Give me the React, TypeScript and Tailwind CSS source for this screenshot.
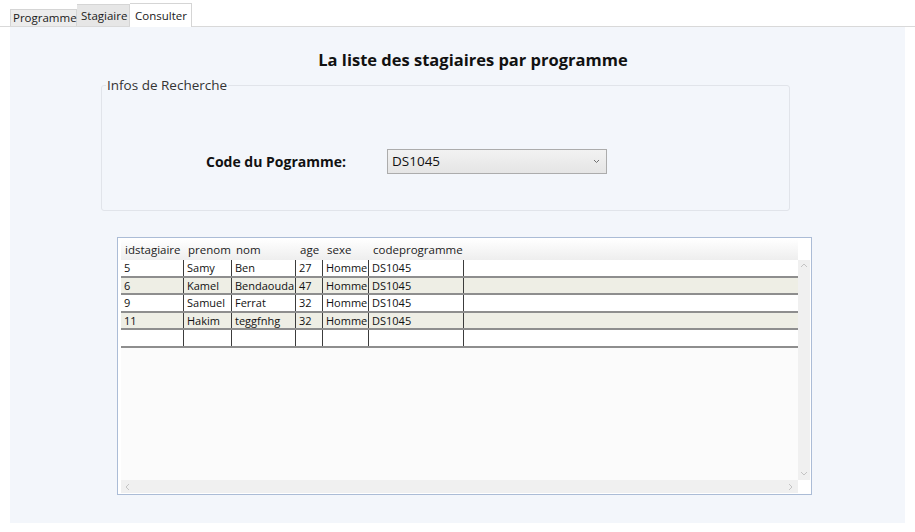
import React from "react";

type Row = {
  id: string;
  prenom: string;
  nom: string;
  age: string;
  sexe: string;
  code: string;
};

const rows: Row[] = [
  { id: "5", prenom: "Samy", nom: "Ben", age: "27", sexe: "Homme", code: "DS1045" },
  { id: "6", prenom: "Kamel", nom: "Bendaouda", age: "47", sexe: "Homme", code: "DS1045" },
  { id: "9", prenom: "Samuel", nom: "Ferrat", age: "32", sexe: "Homme", code: "DS1045" },
  { id: "11", prenom: "Hakim", nom: "teggfnhg", age: "32", sexe: "Homme", code: "DS1045" },
  { id: "", prenom: "", nom: "", age: "", sexe: "", code: "" },
];

const columns: { key: keyof Row; label: string; width: string }[] = [
  { key: "id", label: "idstagiaire", width: "w-[63px]" },
  { key: "prenom", label: "prenom", width: "w-[48px]" },
  { key: "nom", label: "nom", width: "w-[64px]" },
  { key: "age", label: "age", width: "w-[27px]" },
  { key: "sexe", label: "sexe", width: "w-[46px]" },
  { key: "code", label: "codeprogramme", width: "w-[95px]" },
];

function Chevron({ dir }: { dir: "up" | "down" | "left" | "right" }) {
  const d = {
    up: "M1 5 L4 2 L7 5",
    down: "M1 2 L4 5 L7 2",
    left: "M5 1 L2 4 L5 7",
    right: "M2 1 L5 4 L2 7",
  }[dir];
  return (
    <svg width="8" height="8" viewBox="0 0 8 8" fill="none">
      <path d={d} stroke="#c4c4c4" strokeWidth="1" />
    </svg>
  );
}

function Grid() {
  return (
    <div className="ml-[107px] mt-[26px] flex h-[258px] w-[695px] flex-col border border-[#abbcd6] bg-white pb-px pl-[3px] pr-px pt-px">
      <div className="flex min-h-0 flex-1">
        <div className="flex flex-1 flex-col bg-[#fbfbfb]">
          <div className="flex h-[21px] items-end bg-linear-to-b from-white to-[#eeeeee] pb-[3px] text-[11.5px] text-[#222]">
            {columns.map((c) => (
              <div key={c.key} className={`${c.width} shrink-0 pl-[4px] leading-[14px]`}>
                {c.label}
              </div>
            ))}
          </div>
          {rows.map((r, i) => (
            <div
              key={i}
              className={`flex border-b-2 border-[#8e8e8e] text-[11px] text-[#111] ${
                i % 2 === 0 ? "h-[18px] bg-white" : "h-[17px] bg-[#eeeee5]"
              }`}
            >
              {columns.map((c) => (
                <div
                  key={c.key}
                  className={`${c.width} shrink-0 overflow-hidden whitespace-nowrap border-r border-[#3c3c3c] pl-[3px] leading-[15px]`}
                >
                  {r[c.key]}
                </div>
              ))}
            </div>
          ))}
        </div>
        <div className="flex w-[12px] flex-col">
          <div className="h-[21px] bg-white" />
          <div className="flex flex-1 flex-col items-center justify-between bg-[#f0f0f0] py-[2px]">
            <Chevron dir="up" />
            <Chevron dir="down" />
          </div>
        </div>
      </div>
      <div className="flex h-[13px]">
        <div className="flex flex-1 items-center justify-between bg-[#f0f0f0] px-[3px]">
          <Chevron dir="left" />
          <Chevron dir="right" />
        </div>
        <div className="w-[12px] bg-white" />
      </div>
    </div>
  );
}

export default function App() {
  return (
    <div className="h-[532px] w-[915px] overflow-hidden bg-white font-['Open_Sans',sans-serif] text-[#1a1a1a]">
      <div className="flex h-[27px] items-end border-b border-[#d9d9d9] pl-[10px] text-[11.5px]">
        <div className="flex h-[17px] w-[67px] items-center border border-b-0 border-[#d5d5d5] bg-[#ececec] pl-[2px]">
          Programme
        </div>
        <div className="flex h-[22px] w-[53px] items-center border border-b-0 border-l-0 border-[#d5d5d5] bg-[#e6e6e6] pl-[4px]">
          Stagiaire
        </div>
        <div className="-mb-px flex h-[24px] w-[62px] items-center border border-b-0 border-l-0 border-[#d5d5d5] bg-white pl-[5px]">
          Consulter
        </div>
      </div>

      <div className="mx-[10px] flex h-[496px] flex-col bg-[#f3f6fb]">
        <h1 className="mt-[22px] pl-[31px] text-center text-[16.5px] font-bold leading-[22px] text-[#111]">
          La liste des stagiaires par programme
        </h1>

        <fieldset className="ml-[91px] mt-[5px] h-[135px] w-[689px] rounded-[3px] border border-[#e1e4ea] px-0">
          <legend className="ml-[4px] px-px text-[13.5px] leading-[19px] text-[#333]">
            Infos de Recherche
          </legend>
          <div className="mt-[54px] flex items-center pl-[104px]">
            <span className="w-[181px] text-[14px] font-bold text-[#111]">Code du Pogramme:</span>
            <div className="flex h-[25px] w-[220px] items-center justify-between border border-[#acacac] bg-linear-to-b from-[#f2f2f2] to-[#e5e5e5] pl-[4px] pr-[6px] text-[13.5px] text-[#111]">
              <span>DS1045</span>
              <svg width="7" height="5" viewBox="0 0 7 5" fill="none">
                <path d="M1 1 L3.5 3.5 L6 1" stroke="#707070" strokeWidth="1" />
              </svg>
            </div>
          </div>
        </fieldset>

        <Grid />
      </div>
    </div>
  );
}
